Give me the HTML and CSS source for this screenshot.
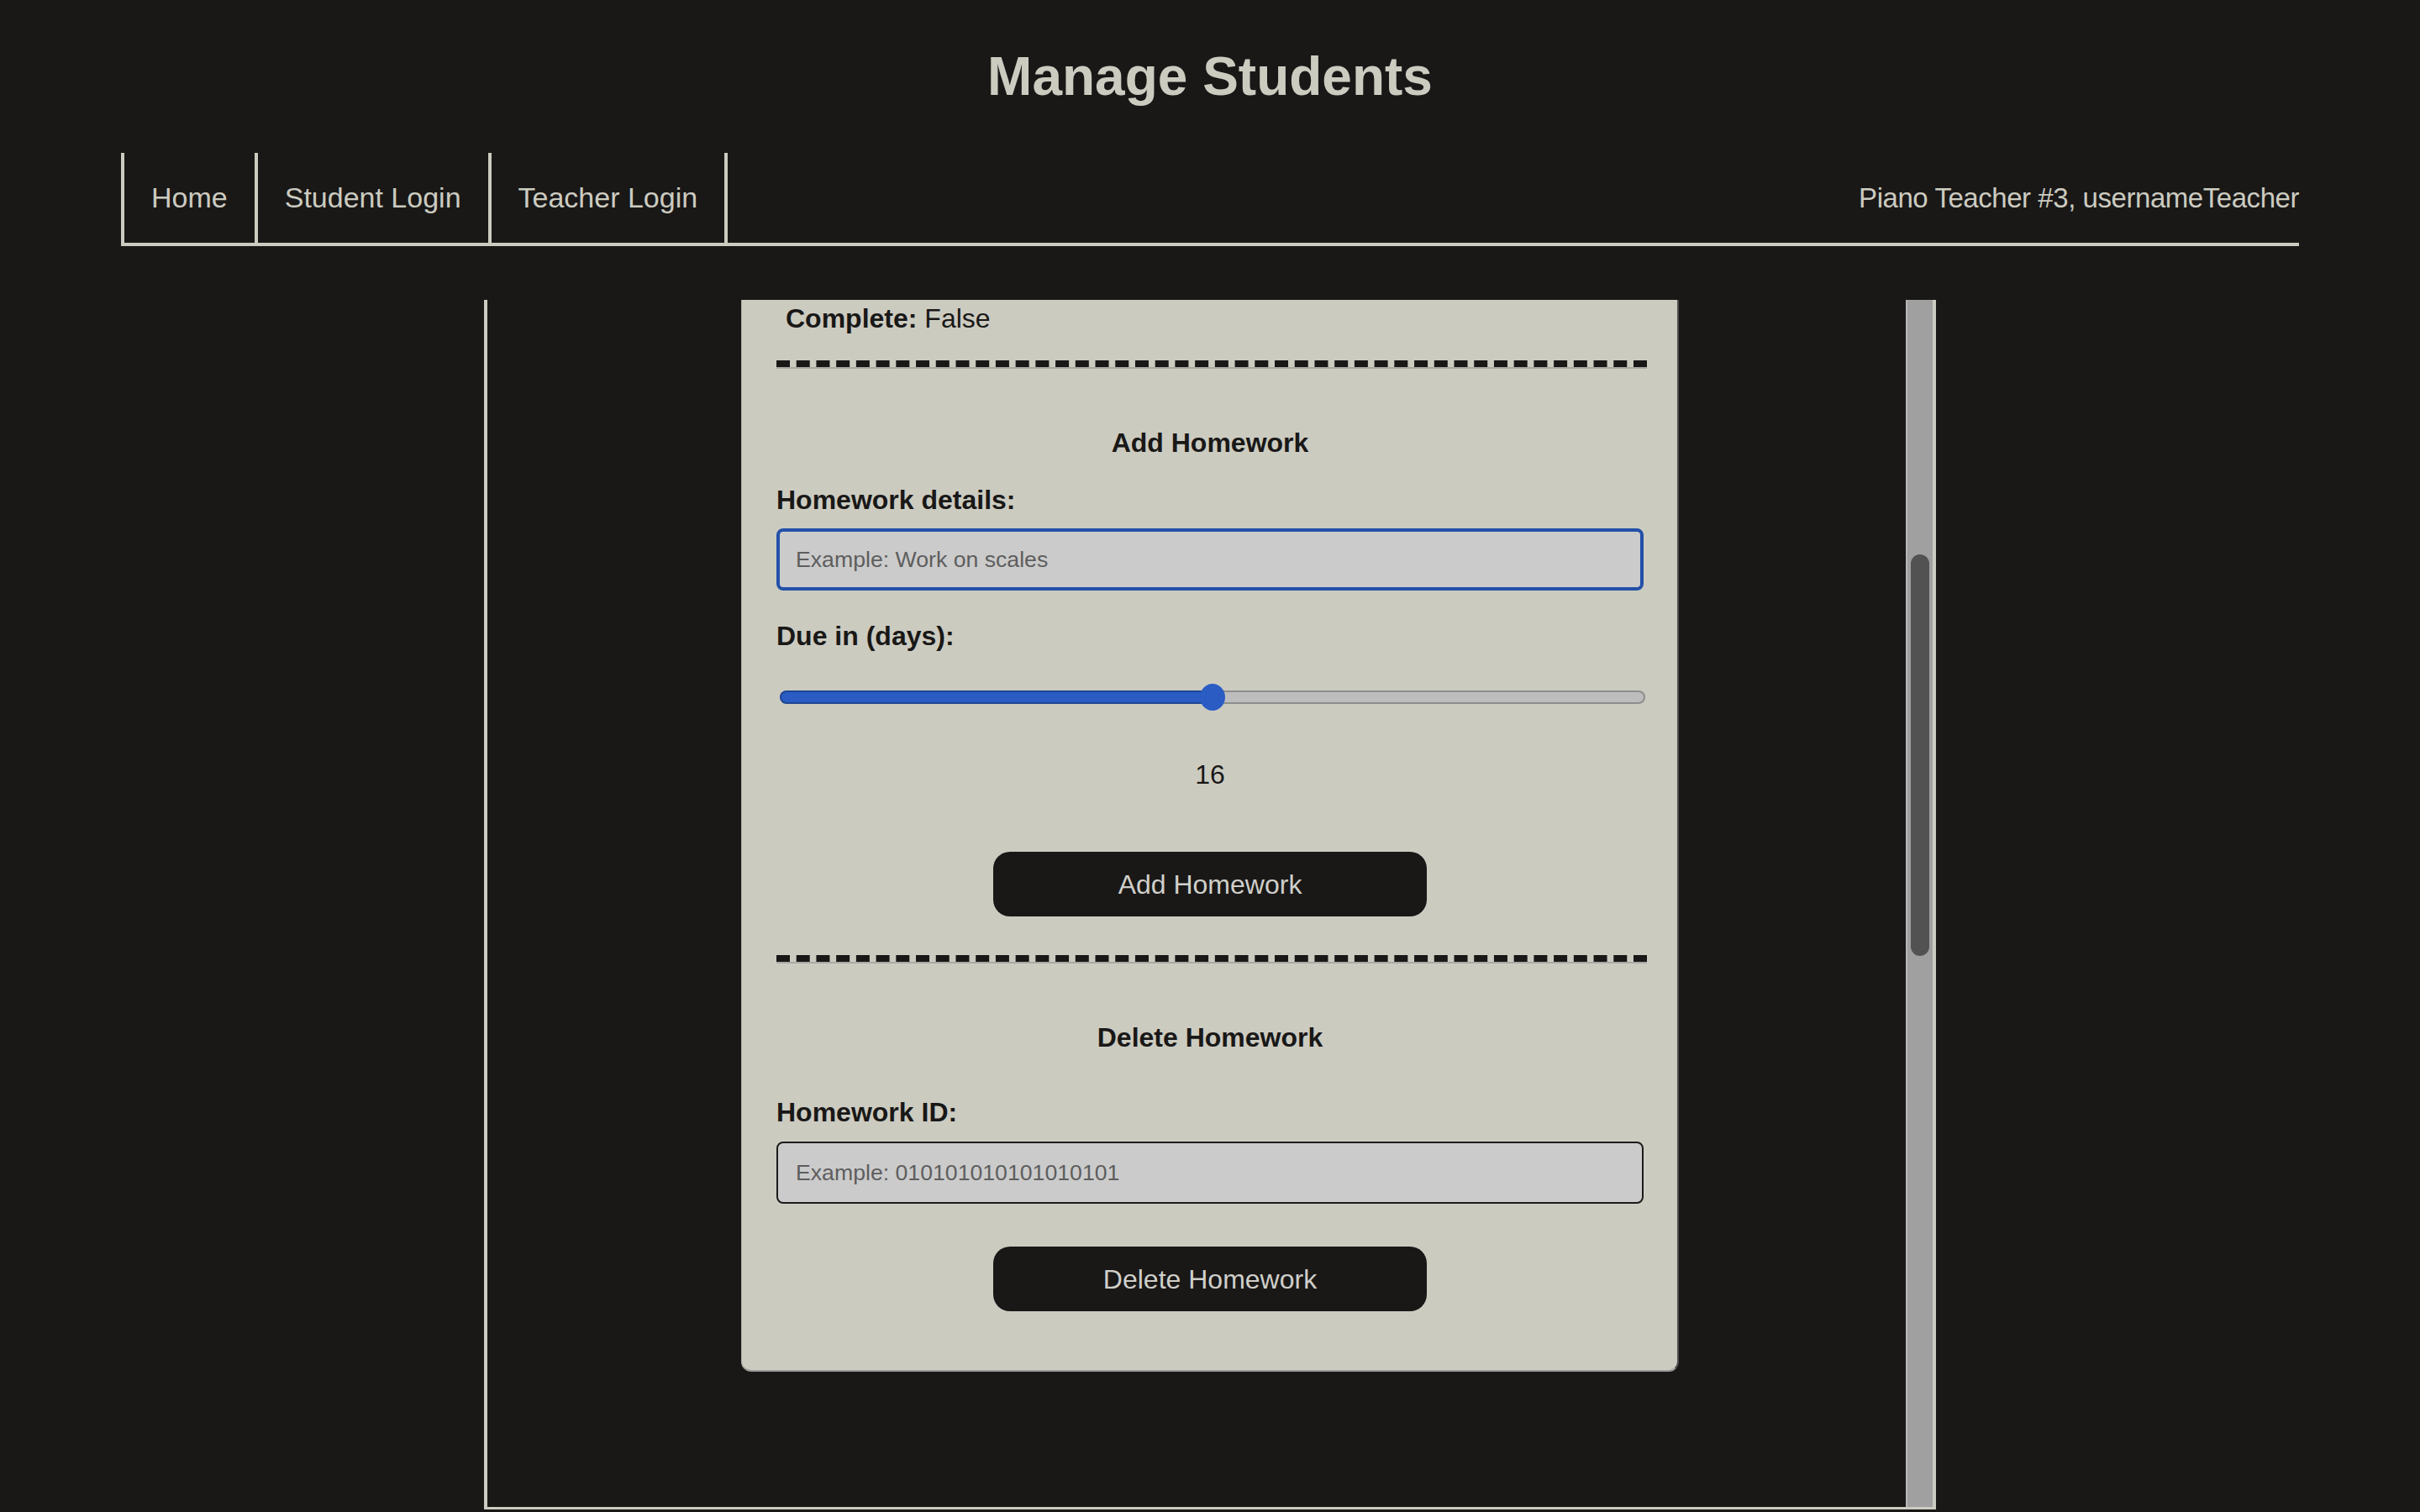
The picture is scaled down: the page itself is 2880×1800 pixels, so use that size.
FILE: index.html
```html
<!DOCTYPE html>
<html lang="en">
<head>
<meta charset="utf-8">
<title>Manage Students</title>
<link rel="stylesheet" href="styles.css">
</head>
<body>
<header class="site-header">
  <h1 class="page-title">Manage Students</h1>
  <nav class="main-nav">
    <ul class="nav-links">
      <li class="nav-item"><a class="nav-link" href="#">Home</a></li>
      <li class="nav-item"><a class="nav-link" href="#">Student Login</a></li>
      <li class="nav-item"><a class="nav-link" href="#">Teacher Login</a></li>
    </ul>
    <span class="nav-user">Piano Teacher #3, usernameTeacher</span>
  </nav>
</header>
<main class="panel">
  <div class="panel-content">
    <section class="card">
      <p class="field-line"><strong>Complete:</strong> False</p>
      <hr class="divider divider-top">
      <h3 class="section-title">Add Homework</h3>
      <label class="field-label label-details" for="hw-details">Homework details:</label>
      <input id="hw-details" class="text-input is-focused input-details" type="text" placeholder="Example: Work on scales">
      <label class="field-label label-due" for="hw-due">Due in (days):</label>
      <input id="hw-due" class="range" type="range" min="1" max="31" value="16" style="--fill: 50%">
      <output class="range-value" for="hw-due">16</output>
      <button class="action-btn add-btn" type="button">Add Homework</button>
      <hr class="divider divider-mid">
      <h3 class="section-title delete-title">Delete Homework</h3>
      <label class="field-label label-id" for="hw-id">Homework ID:</label>
      <input id="hw-id" class="text-input input-id" type="text" placeholder="Example: 010101010101010101">
      <button class="action-btn delete-btn" type="button">Delete Homework</button>
    </section>
  </div>
  <div class="scrollbar"><div class="scroll-thumb"></div></div>
</main>
</body>
</html>
```

FILE: styles.css
```css
* {
  box-sizing: border-box;
}

html, body {
  margin: 0;
  padding: 0;
}

body {
  background: #191817;
  color: #cccbc0;
  font-family: "Liberation Sans", Arial, Helvetica, sans-serif;
  height: 1800px;
  overflow: hidden;
}

.site-header {
  padding-top: 54px;
}

.page-title {
  margin: 0;
  font-size: 64px;
  line-height: 74px;
  font-weight: bold;
  text-align: center;
  color: #cccbc0;
}

.main-nav {
  margin: 54px 5% 0;
  display: flex;
  justify-content: space-between;
  align-items: flex-start;
  border-bottom: 4px solid #cccbc0;
}

.nav-links {
  list-style: none;
  margin: 0;
  padding: 0;
  display: flex;
}

.nav-item {
  border-left: 4px solid #cccbc0;
}

.nav-item:last-child {
  border-right: 4px solid #cccbc0;
}

.nav-link {
  display: block;
  padding: 34px 32px 34px 32px;
  font-size: 34px;
  line-height: 39px;
  color: #cccbc0;
  text-decoration: none;
}

.nav-user {
  padding: 34px 0;
  font-size: 33px;
  line-height: 39px;
  letter-spacing: -0.45px;
  color: #cccbc0;
}

.panel {
  width: 60%;
  height: 1440px;
  margin: 64px auto 0;
  display: flex;
  border-left: 4px solid #cccbc0;
  border-right: 4px solid #cccbc0;
  border-bottom: 3px solid #cccbc0;
  overflow: hidden;
}

.panel-content {
  flex: 1;
  padding-left: 302px;
}

.scrollbar {
  width: 32px;
  flex: none;
  background: #a0a0a0;
  border-left: 2px solid #b6b6b6;
  padding: 303px 3px 0 4px;
}

.scroll-thumb {
  width: 22px;
  height: 478px;
  border-radius: 11px;
  background: #525252;
}

.card {
  width: 1116px;
  background: #cccbc0;
  color: #191817;
  padding: 4px 36px 70px 41px;
  border-left: 1px solid #aeaea6;
  border-right: 2px solid #4e4e4e;
  border-bottom: 2px solid #9a9a98;
  border-radius: 0 0 12px 12px;
  font-size: 32px;
  line-height: 36px;
}

.field-line {
  margin: 0;
  padding-left: 11px;
  font-size: 32px;
  line-height: 36px;
}

.divider {
  height: 0;
  margin: 0;
  border: 0;
  border-top: 8px dashed #191817;
  border-bottom: 2px solid #a9a9a4;
}

.divider-top {
  margin-top: 32px;
}

.divider-mid {
  margin-top: 46px;
}

.section-title {
  margin: 70px 0 0;
  padding-right: 4px;
  font-size: 32px;
  line-height: 36px;
  font-weight: bold;
  text-align: center;
}

.field-label {
  display: block;
  font-size: 32px;
  line-height: 36px;
  font-weight: bold;
}

.label-details {
  margin-top: 32px;
}

.label-due {
  margin-top: 36px;
}

.label-id {
  margin-top: 53px;
}

.text-input {
  display: block;
  width: 1032px;
  height: 74px;
  padding: 0 0 0 21px;
  background: #cbcbcb;
  border: 2px solid #1c1b1a;
  border-radius: 8px;
  font-family: inherit;
  font-size: 26.67px;
  color: #191817;
  outline: none;
}

.text-input::placeholder {
  color: #5e5e5e;
}

.text-input.is-focused {
  border: 4px solid #2350a8;
  padding-left: 19px;
}

.input-details {
  margin-top: 16px;
}

.input-id {
  margin-top: 17px;
}

.range {
  -webkit-appearance: none;
  appearance: none;
  display: block;
  width: 1030px;
  height: 32px;
  margin: 39px 0 0 4px;
  padding: 0;
  background: transparent;
}

.range::-webkit-slider-runnable-track {
  height: 16px;
  border-radius: 8px;
  background: linear-gradient(to right, #2a5cc4 var(--fill), #bdbdbd var(--fill));
  box-shadow: inset 0 0 0 2px rgba(0, 0, 0, 0.25);
}

.range::-webkit-slider-thumb {
  -webkit-appearance: none;
  appearance: none;
  width: 30px;
  height: 32px;
  margin-top: -8px;
  border: none;
  border-radius: 50%;
  background: #2a5cc4;
}

.range-value {
  display: block;
  margin-top: 58px;
  padding-right: 4px;
  font-size: 32px;
  line-height: 36px;
  text-align: center;
}

.action-btn {
  display: block;
  width: 516px;
  height: 77px;
  margin: 0 0 0 calc(50% - 260px);
  padding: 0;
  border: none;
  border-radius: 20px;
  background: #191817;
  color: #d0cfca;
  font-family: inherit;
  font-size: 32px;
  line-height: 36px;
}

.add-btn {
  margin-top: 74px;
}

.delete-title {
  margin-top: 70px;
}

.delete-btn {
  margin-top: 51px;
}
```
